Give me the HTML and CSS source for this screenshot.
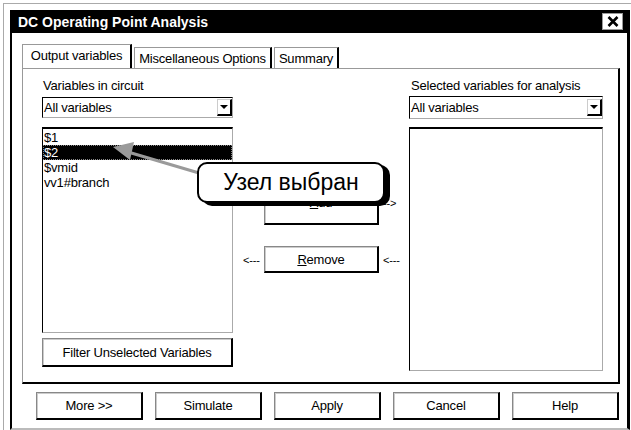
FILE: index.html
```html
<!DOCTYPE html>
<html lang="en">
<head>
<meta charset="UTF-8">
<title>DC Operating Point Analysis</title>
<link rel="stylesheet" href="styles.css">
</head>
<body>
<div class="screen">
  <div class="frame">
    <div class="dialog">
      <div class="titlebar">
        <span class="title">DC Operating Point Analysis</span>
        <span class="close">
          <svg width="12" height="11" viewBox="0 0 12 11"><path d="M1.5 1 L10.5 10 M10.5 1 L1.5 10" stroke="#000" stroke-width="2.6"/></svg>
        </span>
      </div>
      <div class="content">
        <div class="tabs">
          <div class="tab active tab-output">Output variables</div>
          <div class="tab tab-misc">Miscellaneous Options</div>
          <div class="tab tab-summary">Summary</div>
        </div>
        <div class="panel">
          <div class="col col-left">
            <div class="label">Variables in circuit</div>
            <div class="combo"><span>All variables</span><span class="drop"></span></div>
            <div class="list list-left">
              <div class="item">$1</div>
              <div class="item selected">$2</div>
              <div class="item">$vmid</div>
              <div class="item">vv1#branch</div>
            </div>
            <div class="btn filter">Filter Unselected Variables</div>
          </div>
          <div class="middle">
            <div class="move-row add-row">
              <span></span>
              <div class="btn move add"><u>A</u>dd</div>
              <span class="arrow-text">--&gt;</span>
            </div>
            <div class="move-row">
              <span class="arrow-text">&lt;---</span>
              <div class="btn move"><u>R</u>emove</div>
              <span class="arrow-text">&lt;---</span>
            </div>
          </div>
          <div class="col col-right">
            <div class="label">Selected variables for analysis</div>
            <div class="combo"><span>All variables</span><span class="drop"></span></div>
            <div class="list list-right"></div>
          </div>
        </div>
        <div class="buttons">
          <div class="btn action">More &gt;&gt;</div>
          <div class="btn action">Simulate</div>
          <div class="btn action">Apply</div>
          <div class="btn action">Cancel</div>
          <div class="btn action">Help</div>
        </div>
      </div>
    </div>
  </div>

  <!-- annotation over the dialog -->
  <svg class="pointer" width="631" height="430" viewBox="0 0 631 430">
    <line x1="199" y1="173" x2="128" y2="152" stroke="#9a9a9a" stroke-width="3"/>
    <polygon points="113,147 134,142 130,160" fill="#9a9a9a"/>
  </svg>
  <div class="callout">Узел выбран</div>
</div>
</body>
</html>
```

FILE: styles.css
```css
body {
  margin: 0;
  background-color: #fff;
  font-family: "Liberation Sans", Arial, sans-serif;
  font-size: 13px;
  letter-spacing: -0.2px;
  color: #000;
}
.screen {
  position: relative;
  width: 631px;
  height: 430px;
  overflow: hidden;
  padding: 3px 0 0 3px;
  box-sizing: border-box;
}
.frame {
  border-top: 1px solid #aaa;
  border-left: 1px solid #aaa;
  padding: 6px 0 0 6px;
  height: 430px;
}
.dialog {
  width: 620px;
  height: 420px;
  box-sizing: border-box;
  border-left: 2px solid #000;
  border-right: 3px solid #000;
  border-bottom: 2px solid #bbb;
}
.titlebar {
  display: flex;
  align-items: center;
  height: 23px;
  background-color: #000;
  color: #fff;
  padding-left: 6px;
}
.title {
  font-weight: bold;
  font-size: 14px;
  letter-spacing: 0;
}
.close {
  margin-left: auto;
  margin-right: 4px;
  width: 19px;
  height: 15px;
  background-color: #fff;
  border: 1px solid #999;
  display: flex;
  align-items: center;
  justify-content: center;
}
.content {
  padding: 11px 0 0 10px;
}
.tabs {
  display: flex;
  align-items: flex-end;
  height: 24px;
}
.tab {
  height: 21px;
  box-sizing: border-box;
  border-top: 1px solid #999;
  border-left: 1px solid #999;
  border-right: 2px solid #000;
  display: flex;
  align-items: center;
  justify-content: center;
  margin-right: 2px;
  white-space: nowrap;
}
.tab.active {
  height: 24px;
  padding-bottom: 2px;
}
.tab-output {
  width: 110px;
}
.tab-misc {
  width: 138px;
}
.tab-summary {
  width: 65px;
}
.panel {
  display: flex;
  width: 598px;
  height: 316px;
  box-sizing: border-box;
  border-top: 1px solid #999;
  border-left: 1px solid #999;
  border-right: 2px solid #000;
  border-bottom: 2px solid #000;
  padding: 9px 0 0 19px;
}
.label {
  height: 16px;
  line-height: 16px;
  margin-bottom: 3px;
  padding-left: 1px;
}
.col-left {
  width: 191px;
}
.col-right {
  width: 194px;
}
.col-right .label {
  padding-left: 2px;
  margin-bottom: 2px;
}
.combo {
  display: flex;
  align-items: center;
  height: 21px;
  box-sizing: border-box;
  border-top: 1px solid #000;
  border-left: 1px solid #000;
  border-right: 1px solid #aaa;
  border-bottom: 1px solid #aaa;
  padding-left: 1px;
}
.col-right .combo {
  height: 23px;
}
.drop {
  margin-left: auto;
  width: 15px;
  height: 17px;
  box-sizing: border-box;
  border-top: 1px solid #ccc;
  border-left: 1px solid #ccc;
  border-right: 2px solid #000;
  border-bottom: 2px solid #000;
  display: flex;
  align-items: center;
  justify-content: center;
}
.drop::after {
  content: "";
  border-left: 4px solid transparent;
  border-right: 4px solid transparent;
  border-top: 4px solid #000;
}
.list {
  margin-top: 9px;
  box-sizing: border-box;
  border-top: 2px solid #000;
  border-left: 1px solid #000;
  border-right: 1px solid #aaa;
  border-bottom: 1px solid #aaa;
  padding-top: 1px;
}
.list-left {
  height: 206px;
}
.list-right {
  margin-top: 8px;
  height: 244px;
}
.item {
  height: 15px;
  line-height: 15px;
  padding-left: 1px;
}
.item.selected {
  background-color: #000;
  color: #fff;
  outline: 1px dotted #888;
  outline-offset: -1px;
}
.btn {
  display: flex;
  align-items: center;
  justify-content: center;
  box-sizing: border-box;
  background-color: #fff;
  border-top: 1px solid #888;
  border-left: 1px solid #888;
  border-right: 2px solid #000;
  border-bottom: 2px solid #000;
  box-shadow: inset 1px 1px 0 #ccc;
}
.filter {
  margin-top: 5px;
  height: 29px;
}
.middle {
  width: 176px;
  padding: 112px 0 0 10px;
  box-sizing: border-box;
}
.move-row {
  display: grid;
  grid-template-columns: 21px 115px auto;
  align-items: center;
}
.add-row {
  margin-bottom: 21px;
}
.move {
  height: 27px;
}
.move.add {
  height: 35px;
  padding-bottom: 10px;
}
.arrow-text {
  font-size: 11px;
  padding-left: 4px;
}
.move-row .arrow-text:first-child {
  padding-left: 0;
}
.add-row .arrow-text {
  padding-bottom: 10px;
}
.buttons {
  display: flex;
  gap: 12px;
  padding: 8px 0 0 14px;
}
.action {
  width: 107px;
  height: 28px;
}
.pointer {
  position: absolute;
  left: 0;
  top: 0;
}
.callout {
  position: absolute;
  left: 197px;
  top: 162px;
  width: 188px;
  height: 41px;
  box-sizing: border-box;
  background-color: #fff;
  border: 2px solid #000;
  border-radius: 10px;
  box-shadow: 5px 3px 0 #000;
  font-family: "Liberation Sans", Arial, sans-serif;
  font-size: 23px;
  letter-spacing: 0;
  display: flex;
  align-items: center;
  justify-content: center;
}
```
